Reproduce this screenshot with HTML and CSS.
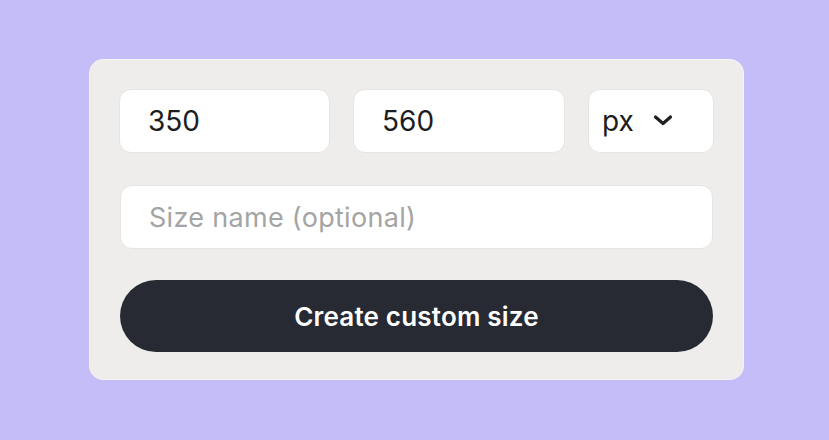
FILE: index.html
```html
<!DOCTYPE html>
<html>
<head>
<meta charset="utf-8">
<link rel="stylesheet" href="styles.css">
</head>
<body>
<div class="stage">
  <div class="card">
    <div class="row">
      <div class="field"><span class="value">350</span></div>
      <div class="field"><span class="value">560</span></div>
      <div class="field select">
        <span class="value">px</span>
        <svg class="chev" width="22" height="14" viewBox="0 0 22 14"><path d="M3.5 4 L11 10.5 L18.5 4" fill="none" stroke="#1f2024" stroke-width="3.2" stroke-linecap="round" stroke-linejoin="round"/></svg>
      </div>
    </div>
    <div class="field name"><span class="placeholder">Size name (optional)</span></div>
    <div class="button">Create custom size</div>
  </div>
</div>
</body>
</html>
```
FILE: styles.css
```css
* { box-sizing: border-box; }
html, body { margin: 0; padding: 0; }
body {
  background: #c5bdf7;
  font-family: Inter, "Noto Sans", sans-serif;
  width: 829px;
  height: 440px;
}
.stage {
  height: 440px;
  display: flex;
  justify-content: center;
  align-items: flex-start;
  padding-top: 59px;
  padding-left: 4px;
}
.card {
  width: 655px;
  height: 321px;
  background: #eeedeb;
  border: 1px solid #f5f4f2;
  border-radius: 14px;
  padding: 29px 29px 27px 29px;
  display: flex;
  flex-direction: column;
}
.row {
  display: grid;
  grid-template-columns: 211px 212px 126px;
  gap: 23px;
}
.field {
  height: 64px;
  background: #ffffff;
  border: 1px solid #e6e5e3;
  border-radius: 12px;
  display: flex;
  align-items: center;
  padding-left: 28px;
}
.value {
  font-size: 28px;
  color: #1c1d21;
  font-weight: 400;
}
.select {
  padding-left: 13px;
}
.chev {
  margin-left: 18px;
  margin-top: -2px;
}
.name {
  margin-top: 32px;
  margin-left: 1px;
  margin-right: 1px;
}
.placeholder {
  font-size: 27px;
  letter-spacing: 0.3px;
  color: #a4a4a4;
}
.button {
  margin-top: 31px;
  margin-left: 1px;
  margin-right: 1px;
  height: 72px;
  border-radius: 36px;
  background: #272a33;
  color: #ffffff;
  font-size: 26px;
  letter-spacing: 0.2px;
  font-weight: 600;
  display: flex;
  align-items: center;
  justify-content: center;
}
```
